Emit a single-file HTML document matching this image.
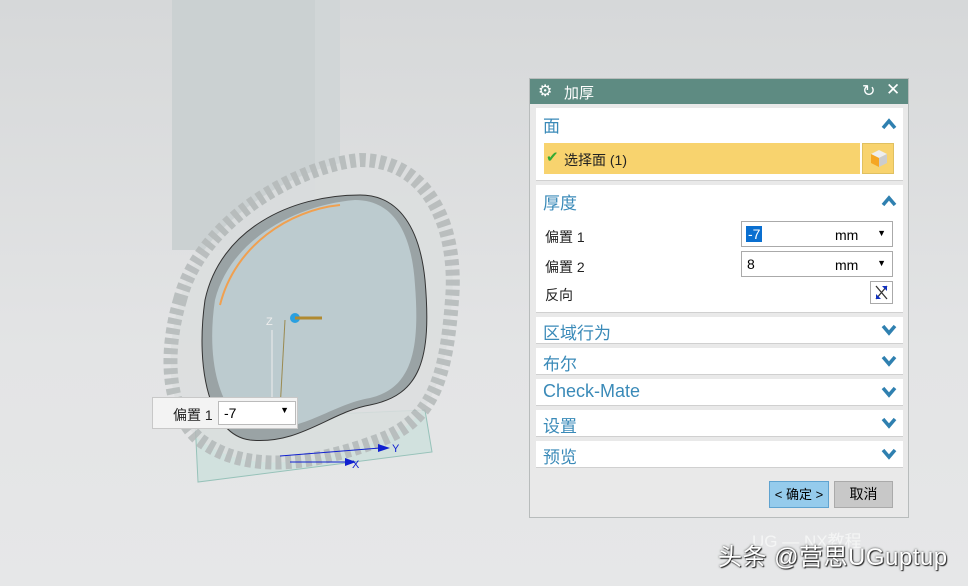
<!DOCTYPE html>
<html><head><meta charset="utf-8"><style>
*{margin:0;padding:0;box-sizing:border-box}
body{width:968px;height:586px;overflow:hidden;position:relative;font-family:"Liberation Sans","Noto Sans CJK SC",sans-serif;background:linear-gradient(#d6d8d9,#e3e4e5 60%,#e6e7e8)}
.abs{position:absolute}
.dlg{left:529px;top:78px;width:380px;height:440px;background:#e9e9e9;border:1px solid #b8bcbc}
.tb{left:0;top:0;width:378px;height:25px;background:#5e8b82;color:#fff;font-size:15px}
.sec{position:absolute;left:6px;width:367px;background:#fff;border-bottom:1px solid #d0d0d0}
.h{position:absolute;left:7px;font-size:17px;color:#3a8ab8}
.chev{position:absolute;right:6px;width:16px;height:12px}
.lbl{position:absolute;font-size:14px;color:#222}
.inp{position:absolute;left:205px;width:152px;height:26px;border:1px solid #aaa;background:#fff;font-size:14px}
</style></head><body>
<svg class="abs" style="left:0;top:0" width="968" height="586">
<rect x="172" y="0" width="168" height="250" fill="#cbd1d2"/>
<rect x="315" y="0" width="25" height="250" fill="#d1d6d7"/>
<polygon points="195,420 425,410 432,452 198,482" fill="#cfe1de" stroke="#8fbfb5" opacity="0.9"/>
<path d="M180,300 C200,220 300,165 360,160 C430,160 458,230 452,300 C446,380 432,420 380,440 C300,470 240,470 200,440 C165,410 165,350 180,300Z" fill="#dcdfdf" stroke="#b4b9b9" stroke-width="14" stroke-dasharray="6 4" opacity="0.85"/>
<path d="M205,300 C220,230 290,195 360,195 C400,195 420,230 425,280 C432,360 420,395 370,405 C330,412 300,445 250,440 C210,435 195,370 205,300Z" fill="#9aa3a5" stroke="#333"/>
<path d="M215,300 C230,240 295,205 355,200 C395,200 412,235 415,285 C420,350 412,388 370,398 C330,405 305,432 260,428 C222,425 205,365 215,300Z" fill="#bccbcf"/>
<path d="M220,305 C235,245 290,210 340,205" stroke="#f0a050" stroke-width="2" fill="none"/>
<line x1="285" y1="320" x2="280" y2="410" stroke="#9a8a50"/>
<circle cx="295" cy="318" r="5" fill="#2aa0e0"/><line x1="295" y1="318" x2="322" y2="318" stroke="#b08a30" stroke-width="3"/>
<line x1="272" y1="330" x2="272" y2="410" stroke="#eee"/>
<text x="266" y="325" font-size="11" fill="#eee">Z</text>
<line x1="280" y1="456" x2="380" y2="448" stroke="#1020d0"/><polygon points="378,444 390,448 378,452" fill="#1020d0"/>
<line x1="290" y1="462" x2="350" y2="462" stroke="#1020d0"/><polygon points="345,458 356,462 345,466" fill="#1020d0"/>
<text x="392" y="452" font-size="11" fill="#1020d0">Y</text><text x="352" y="468" font-size="11" fill="#1020d0">X</text>
</svg>
<div class="abs" style="left:152px;top:397px;width:146px;height:32px;background:#f3f3f3;border:1px solid #c8c8c8">
<span class="abs" style="left:20px;top:7px;font-size:14px;color:#222">偏置 1</span>
<div class="abs" style="left:65px;top:3px;width:78px;height:24px;border:1px solid #bbb;background:#fff;font-size:14px;padding:3px 5px">-7<span class="abs" style="right:6px;top:3px;font-size:9px">▼</span></div></div>
<div class="abs dlg">
<div class="abs tb"><span class="abs" style="left:8px;top:2px;font-size:16px">⚙</span><span class="abs" style="left:34px;top:3px">加厚</span><span class="abs" style="left:332px;top:2px;font-size:16px">↻</span><span class="abs" style="left:356px;top:1px;font-size:17px">✕</span></div>
<div class="sec" style="top:29px;height:73px"><span class="h" style="top:4px">面</span>
<svg class="chev" style="top:10px" viewBox="0 0 16 12"><path d="M2,10 L8,3 L14,10" stroke="#2f80b0" stroke-width="3.5" fill="none"/></svg>
<div class="abs" style="left:8px;top:35px;width:316px;height:31px;background:#f8d36e"><span class="abs" style="left:2px;top:5px;color:#3a3;font-size:15px">✔</span><span class="abs" style="left:20px;top:7px;font-size:14px;color:#222">选择面 (1)</span></div>
<div class="abs" style="left:326px;top:35px;width:32px;height:31px;background:#f8d36e;border:1px solid #e0c060"><svg width="30" height="29"><polygon points="8,10 16,6 24,10 16,14" fill="#eee"/><polygon points="8,10 16,14 16,23 8,19" fill="#f5a623"/><polygon points="16,14 24,10 24,19 16,23" fill="#ccc"/></svg></div></div>
<div class="sec" style="top:106px;height:128px"><span class="h" style="top:4px">厚度</span>
<svg class="chev" style="top:10px" viewBox="0 0 16 12"><path d="M2,10 L8,3 L14,10" stroke="#2f80b0" stroke-width="3.5" fill="none"/></svg>
<span class="lbl" style="left:9px;top:42px">偏置 1</span><span class="lbl" style="left:9px;top:72px">偏置 2</span><span class="lbl" style="left:9px;top:100px">反向</span>
<div class="inp" style="top:36px"><span class="abs" style="left:4px;top:4px;background:#0a6fd0;color:#fff;padding:0 2px">-7</span><span class="abs" style="left:93px;top:5px">mm</span><span class="abs" style="right:6px;top:6px;font-size:9px">▼</span></div>
<div class="inp" style="top:66px"><span class="abs" style="left:5px;top:4px">8</span><span class="abs" style="left:93px;top:5px">mm</span><span class="abs" style="right:6px;top:6px;font-size:9px">▼</span></div>
<div class="abs" style="left:334px;top:96px;width:23px;height:23px;border:1px solid #aaa;background:#fff"><svg width="21" height="21"><path d="M5,4 L16,17 M16,4 L5,17" stroke="#333" stroke-width="1.3"/><path d="M5,17 l0,-5 l5,5z M16,4 l0,5 l-5,-5z" fill="#1030c0"/></svg></div></div>
<div class="sec" style="top:238px;height:27px"><span class="h" style="top:2px">区域行为</span><svg class="chev" style="top:7px" viewBox="0 0 16 12"><path d="M2,2 L8,9 L14,2" stroke="#2f80b0" stroke-width="3.5" fill="none"/></svg></div>
<div class="sec" style="top:269px;height:27px"><span class="h" style="top:2px">布尔</span><svg class="chev" style="top:7px" viewBox="0 0 16 12"><path d="M2,2 L8,9 L14,2" stroke="#2f80b0" stroke-width="3.5" fill="none"/></svg></div>
<div class="sec" style="top:300px;height:27px"><span class="h" style="top:2px;font-size:18px">Check-Mate</span><svg class="chev" style="top:7px" viewBox="0 0 16 12"><path d="M2,2 L8,9 L14,2" stroke="#2f80b0" stroke-width="3.5" fill="none"/></svg></div>
<div class="sec" style="top:331px;height:27px"><span class="h" style="top:2px">设置</span><svg class="chev" style="top:7px" viewBox="0 0 16 12"><path d="M2,2 L8,9 L14,2" stroke="#2f80b0" stroke-width="3.5" fill="none"/></svg></div>
<div class="sec" style="top:362px;height:27px"><span class="h" style="top:2px">预览</span><svg class="chev" style="top:7px" viewBox="0 0 16 12"><path d="M2,2 L8,9 L14,2" stroke="#2f80b0" stroke-width="3.5" fill="none"/></svg></div>
<div class="abs" style="left:239px;top:402px;width:60px;height:27px;background:#95cbec;border:1px solid #5fa3d0;font-size:13px;text-align:center;line-height:25px">&lt; 确定 &gt;</div>
<div class="abs" style="left:304px;top:402px;width:59px;height:27px;background:#c8c8c8;border:1px solid #aaa;font-size:14px;text-align:center;line-height:25px">取消</div>
</div>
<div class="abs" style="left:752px;top:527px;font-size:17px;color:#fff;opacity:.6">UG — NX教程</div>
<div class="abs" style="left:718px;top:537px;font-size:24px;letter-spacing:0.5px;color:#fff;text-shadow:1px 1px 1px #222,0 0 2px #333">头条 @营思UGuptup</div>
</body></html>
